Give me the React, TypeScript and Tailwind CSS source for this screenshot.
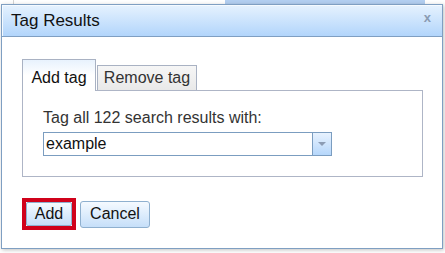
export default function App() {
  return (
    <div className="relative w-[445px] h-[253px] overflow-hidden bg-white font-['Liberation_Sans',Arial,sans-serif] text-[#222]">
      {/* page behind the dialog */}
      <div className="flex h-[5px]">
        <div className="ml-[13px] w-px bg-[#d4d4d4]" />
        <div className="ml-[211px] w-[200px] bg-[#b3cff1]" />
      </div>

      {/* dialog */}
      <div className="absolute left-[1px] top-[4px] w-[442px] h-[245px] border border-[#7f9fc2] bg-white shadow-[1px_1px_4px_rgba(0,0,0,0.25)] flex flex-col">
        <div className="h-[32px] shrink-0 flex items-start justify-between border-b border-[#7f9fc2] bg-gradient-to-b from-[#e6f2fe] to-[#b2d5fb] shadow-[inset_1px_1px_0_#f5faff]">
          <span className="pl-[9px] pt-[6px] text-[17px] leading-[20px] text-[#111]">Tag Results</span>
          <span className="pr-[11px] pt-[6px] text-[13px] leading-[14px] font-bold text-[#8a9bb2]">x</span>
        </div>

        <div className="flex flex-col pl-[20px] pt-[22px]">
          {/* tabs */}
          <div className="flex items-end text-[16px] leading-[18px]">
            <div className="relative z-10 -mb-px w-[74px] h-[32px] border border-b-0 border-[#a9b2c3] bg-gradient-to-b from-[#e8f2fd] via-white to-white pt-[9px] text-center text-[#111]">
              Add tag
            </div>
            <div className="ml-px w-[100px] h-[25px] border border-b-0 border-[#a9b2c3] bg-gradient-to-b from-[#f6f6f6] to-[#e9e9e9] pt-[3px] text-center text-[#333]">
              Remove tag
            </div>
          </div>

          {/* tab panel */}
          <div className="w-[401px] border border-[#aeb5c6] pl-[20px] pt-[18px] pb-[20px]">
            <p className="text-[16px] leading-[18px] text-[#333]">Tag all 122 search results with:</p>
            <div className="mt-[5px] flex w-[289px] h-[24px] border border-[#7b9dc0] bg-white">
              <div className="flex-1 pl-[2px] text-[16px] leading-[22px] text-[#111]">example</div>
              <div className="w-[19px] border-l border-[#7b9dc0] bg-gradient-to-b from-[#e8f2fe] to-[#b6d7fb] flex items-center justify-center">
                <svg width="8" height="5" viewBox="0 0 8 5">
                  <path d="M0 0h8L4 4z" fill="#8c9cb4" />
                </svg>
              </div>
            </div>
          </div>

          {/* buttons */}
          <div className="mt-[21px] flex items-center gap-[4px] text-[16px] leading-[18px]">
            <div className="border-[4px] border-[#d0021b]">
              <button className="w-[46px] h-[24px] border border-[#8fb0cf] rounded-[2px] bg-gradient-to-b from-[#f5faff] to-[#c6dff9] text-[#111]">
                Add
              </button>
            </div>
            <button className="w-[70px] h-[27px] border border-[#8fb0cf] rounded-[3px] bg-gradient-to-b from-[#f5faff] to-[#c6dff9] text-[#111]">
              Cancel
            </button>
          </div>
        </div>
      </div>
    </div>
  );
}
